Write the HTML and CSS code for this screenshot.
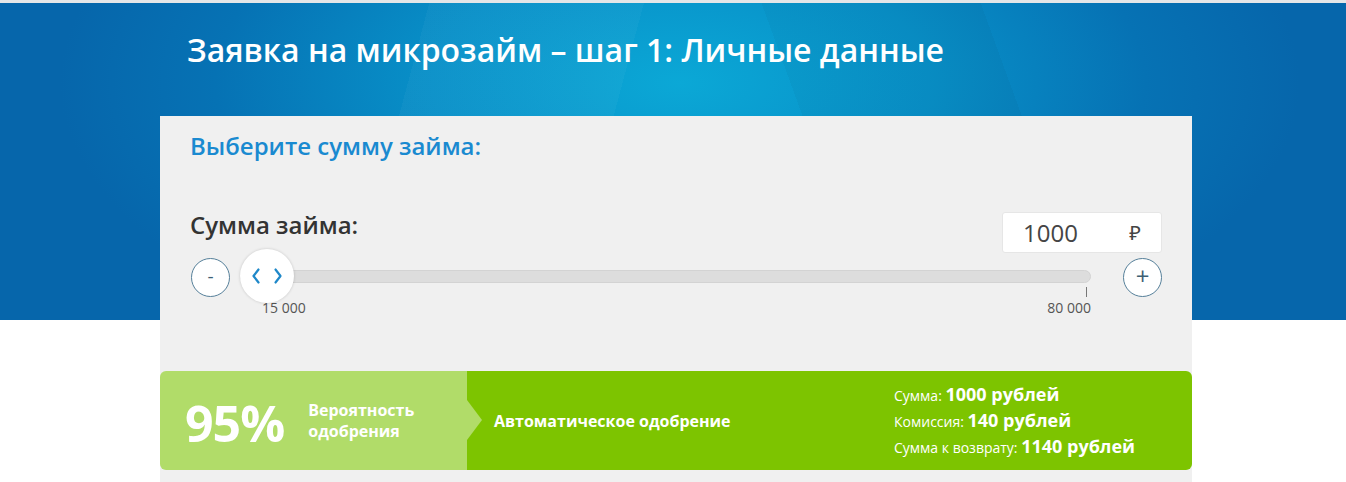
FILE: index.html
```html
<!DOCTYPE html>
<html lang="ru">
<head>
<meta charset="utf-8">
<title>Заявка на микрозайм</title>
<link rel="stylesheet" href="styles.css">
</head>
<body>
<div class="page">
  <header class="hero">
    <h1 class="hero-title">Заявка на микрозайм – шаг 1: Личные данные</h1>
  </header>
  <main class="panel">
    <h2 class="panel-title">Выберите сумму займа:</h2>
    <div class="amount-head">
      <span class="amount-label">Сумма займа:</span>
      <div class="amount-input">
        <span class="amount-value">1000</span>
        <span class="amount-cur">₽</span>
      </div>
    </div>
    <div class="slider-row">
      <button class="round-btn">-</button>
      <div class="slider">
        <div class="track"></div>
        <div class="handle">
          <svg width="30" height="18" viewBox="0 0 30 18"><path d="M6.5 2.5 L1.5 9 L6.5 15.5" fill="none" stroke="#1f88c9" stroke-width="2.2" stroke-linecap="round" stroke-linejoin="round"/><path d="M23.5 2.5 L28.5 9 L23.5 15.5" fill="none" stroke="#1f88c9" stroke-width="2.2" stroke-linecap="round" stroke-linejoin="round"/></svg>
        </div>
        <div class="scale">
          <span class="scale-min">15 000</span>
          <span class="scale-max">80 000</span>
        </div>
      </div>
      <button class="round-btn plus">+</button>
    </div>
    <section class="result">
      <div class="prob">
        <span class="prob-num">95%</span>
        <span class="prob-text">Вероятность<br>одобрения</span>
      </div>
      <div class="auto">
        <span class="auto-text">Автоматическое одобрение</span>
      </div>
      <div class="totals">
        <div class="tline">Сумма: <b>1000 рублей</b></div>
        <div class="tline">Комиссия: <b>140 рублей</b></div>
        <div class="tline">Сумма к возврату: <b>1140 рублей</b></div>
      </div>
    </section>
  </main>
</div>
</body>
</html>
```

FILE: styles.css
```css
* { box-sizing: border-box; }
html, body { margin: 0; padding: 0; }
body {
  font-family: "Open Sans", "Noto Sans", sans-serif;
  background: #ffffff;
  border-top: 3px solid #e4e6e8;
}
.page {
  background:
    linear-gradient(105deg, rgba(255,255,255,0) 0 30%, rgba(255,255,255,0.03) 30% 45%, rgba(255,255,255,0) 45%),
    linear-gradient(70deg, rgba(0,0,0,0) 0 60%, rgba(0,0,0,0.03) 60% 75%, rgba(0,0,0,0) 75%),
    radial-gradient(ellipse 620px 300px at 680px 80px, #0ba8d6 0%, #0890c8 40%, #0672b4 75%, #0666ab 100%);
  background-size: 100% 317px;
  background-repeat: no-repeat;
  min-height: 479px;
}
.hero {
  padding: 29px 0 0 187px;
  height: 113px;
}
.hero-title {
  margin: 0;
  color: #ffffff;
  font-size: 32px;
  font-weight: 600;
  line-height: 36px;
}
.panel {
  margin-left: 160px;
  width: 1032px;
  background: #f0f0f0;
  padding: 15px 0 14px 0;
}
.panel-title {
  margin: 0 0 0 30px;
  color: #1a8ad0;
  font-size: 24px;
  font-weight: 600;
  line-height: 30px;
}
.amount-head {
  display: flex;
  justify-content: space-between;
  align-items: flex-start;
  margin-top: 51px;
  padding: 0 30px 0 30px;
}
.amount-label {
  font-size: 24px;
  font-weight: 600;
  color: #333333;
  line-height: 30px;
  margin-top: -2px;
}
.amount-input {
  width: 160px;
  height: 41px;
  background: #ffffff;
  border: 1px solid #e6e6e6;
  border-radius: 3px;
  display: flex;
  align-items: center;
  justify-content: space-between;
  padding: 0 20px 0 20px;
}
.amount-value {
  font-size: 24px;
  color: #454545;
}
.amount-cur {
  font-size: 20px;
  color: #444444;
  font-weight: 400;
}
.slider-row {
  display: flex;
  align-items: flex-start;
  padding: 5px 30px 0 31px;
}
.round-btn {
  width: 39px;
  height: 39px;
  border-radius: 50%;
  border: 1px solid #56809a;
  background: #ffffff;
  color: #3d5f74;
  font-family: "Open Sans", sans-serif;
  font-size: 19px;
  line-height: 1;
  padding: 0 0 3px 0;
  flex: none;
}
.round-btn.plus { font-size: 24px; padding-bottom: 3px; }
.slider {
  position: relative;
  flex: 1;
  margin: 0 32px 0 10px;
  padding-top: 12px;
}
.track {
  height: 13px;
  background: #dddddd;
  border: 1px solid #d3d3d3;
  border-radius: 7px;
}
.handle {
  position: absolute;
  left: 0;
  top: -9px;
  width: 54px;
  height: 54px;
  border-radius: 50%;
  background: #ffffff;
  box-shadow: 0 0 3px rgba(0,0,0,0.18);
  display: flex;
  align-items: center;
  justify-content: center;
}
.scale {
  display: flex;
  justify-content: space-between;
  padding-left: 22px;
  margin-top: 15px;
  font-size: 14px;
  color: #555555;
  line-height: 19px;
}
.scale-max {
  position: relative;
}
.scale-max::before {
  content: "";
  position: absolute;
  right: 4px;
  top: -11px;
  width: 1px;
  height: 10px;
  background: #777777;
}
.result {
  display: flex;
  margin-top: 54px;
  height: 99px;
  border-radius: 6px;
  overflow: hidden;
  color: #ffffff;
}
.prob {
  width: 307px;
  flex: none;
  background: #b1dc69;
  display: flex;
  align-items: center;
  padding-left: 25px;
}
.prob-num {
  font-size: 50px;
  font-weight: 700;
  letter-spacing: -1px;
  line-height: 1;
  margin-top: 4px;
}
.prob-text {
  margin-left: 24px;
  font-size: 16px;
  font-weight: 700;
  line-height: 21px;
}
.auto {
  position: relative;
  flex: 1;
  background: #7dc400;
  display: flex;
  align-items: center;
  padding-left: 27px;
}
.auto::before {
  content: "";
  position: absolute;
  left: 0;
  top: 29px;
  border-left: 15px solid #b1dc69;
  border-top: 20px solid transparent;
  border-bottom: 20px solid transparent;
}
.auto-text {
  font-size: 16px;
  font-weight: 700;
}
.totals {
  width: 298px;
  flex: none;
  background: #7dc400;
  padding-top: 12px;
}
.tline {
  font-size: 14px;
  line-height: 26px;
  height: 26px;
}
.tline b {
  font-size: 18px;
  font-weight: 700;
  line-height: 20px;
}
```
